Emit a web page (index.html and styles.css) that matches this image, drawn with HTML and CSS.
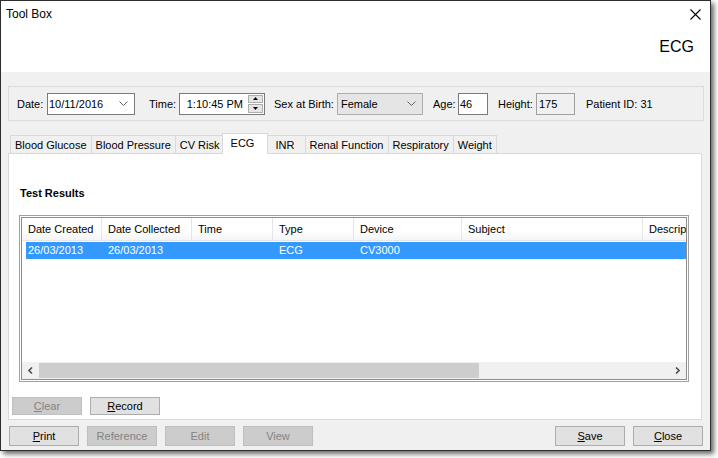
FILE: index.html
```html
<!DOCTYPE html>
<html lang="en">

<head>
    <meta charset="UTF-8">
    <title>Tool Box</title>
    <link rel="stylesheet" href="styles.css">
</head>

<body>
    <div class="window">
        <div class="header">
            <div class="titlebar">
                <span class="title">Tool Box</span>
                <svg class="close-x" width="11" height="11" viewBox="0 0 11 11">
                    <path d="M0.5 0.5 L10.5 10.5 M10.5 0.5 L0.5 10.5" stroke="#000" stroke-width="1.1" fill="none" />
                </svg>
            </div>
            <div class="heading">ECG</div>
        </div>

        <div class="content">
            <!-- patient details -->
            <div class="patient">
                <span class="lbl lbl-date">Date:</span>
                <div class="field combo date">
                    <span>10/11/2016</span>
                    <svg class="chev" width="9" height="5" viewBox="0 0 9 5"><polyline points="0.5,0.5 4.5,4.5 8.5,0.5" fill="none" stroke="#606060" /></svg>
                </div>
                <span class="lbl lbl-time">Time:</span>
                <div class="field time">
                    <span class="time-val">1:10:45 PM</span>
                    <div class="spin">
                        <div class="spin-btn"><svg width="5" height="3" viewBox="0 0 5 3"><polygon points="2.5,0 5,3 0,3" fill="#000" /></svg></div>
                        <div class="spin-btn"><svg width="5" height="3" viewBox="0 0 5 3"><polygon points="0,0 5,0 2.5,3" fill="#000" /></svg></div>
                    </div>
                </div>
                <span class="lbl lbl-sex">Sex at Birth:</span>
                <div class="field combo sex">
                    <span>Female</span>
                    <svg class="chev" width="9" height="5" viewBox="0 0 9 5"><polyline points="0.5,0.5 4.5,4.5 8.5,0.5" fill="none" stroke="#606060" /></svg>
                </div>
                <span class="lbl lbl-age">Age:</span>
                <div class="field age">46</div>
                <span class="lbl lbl-height">Height:</span>
                <div class="field height">175</div>
                <span class="lbl lbl-pid">Patient ID: 31</span>
            </div>

            <!-- tabs -->
            <div class="tabs">
                <div class="tab">Blood Glucose</div>
                <div class="tab">Blood Pressure</div>
                <div class="tab">CV Risk</div>
                <div class="tab active">ECG</div>
                <div class="tab">INR</div>
                <div class="tab">Renal Function</div>
                <div class="tab">Respiratory</div>
                <div class="tab">Weight</div>
            </div>

            <div class="panel">
                <div class="section-title">Test Results</div>
                <div class="list">
                    <div class="list-inner">
                        <div class="list-head">
                            <div class="col c1">Date Created</div>
                            <div class="col c2">Date Collected</div>
                            <div class="col c3">Time</div>
                            <div class="col c4">Type</div>
                            <div class="col c5">Device</div>
                            <div class="col c6">Subject</div>
                            <div class="col c7">Description</div>
                        </div>
                        <div class="list-row">
                            <div class="col c1">26/03/2013</div>
                            <div class="col c2">26/03/2013</div>
                            <div class="col c3"></div>
                            <div class="col c4">ECG</div>
                            <div class="col c5">CV3000</div>
                            <div class="col c6"></div>
                        </div>
                        <div class="hscroll">
                            <div class="arrow"><svg width="5" height="7" viewBox="0 0 5 7"><polyline points="4,0.5 1,3.5 4,6.5" fill="none" stroke="#505050" stroke-width="1.6" /></svg></div>
                            <div class="thumb"></div>
                            <div class="track"></div>
                            <div class="arrow"><svg width="5" height="7" viewBox="0 0 5 7"><polyline points="1,0.5 4,3.5 1,6.5" fill="none" stroke="#505050" stroke-width="1.6" /></svg></div>
                        </div>
                    </div>
                </div>
                <div class="panel-buttons">
                    <div class="btn disabled"><u>C</u>lear</div>
                    <div class="btn"><u>R</u>ecord</div>
                </div>
            </div>
        </div>

        <div class="footer">
            <div class="btn"><u>P</u>rint</div>
            <div class="btn disabled">Reference</div>
            <div class="btn disabled">Edit</div>
            <div class="btn disabled">View</div>
            <div class="spacer"></div>
            <div class="btn"><u>S</u>ave</div>
            <div class="btn"><u>C</u>lose</div>
        </div>
    </div>
</body>

</html>
```

FILE: styles.css
```css
* {
    box-sizing: border-box;
    margin: 0;
    padding: 0;
}

body {
    min-height: 458px;
    background: #fff;
    font-family: "Liberation Sans", Arial, sans-serif;
    font-size: 11px;
    color: #000;
}

.window {
    width: 711px;
    height: 451px;
    border: 1px solid #2d2d2d;
    box-shadow: 3px 3px 5px rgba(0, 0, 0, 0.6);
    background: #f0f0f0;
    display: flex;
    flex-direction: column;
}

/* white header */
.header {
    height: 71px;
    flex-shrink: 0;
    background: #fff;
}

.titlebar {
    height: 16px;
    margin-top: 5px;
    padding: 0 9px 0 5px;
    display: flex;
    justify-content: space-between;
    align-items: center;
}

.title {
    font-size: 12px;
}

.heading {
    margin-top: 16px;
    padding-right: 16px;
    text-align: right;
    font-size: 16px;
    line-height: 18px;
}

.content {
    height: 348px;
    flex-shrink: 0;
    padding: 14px 6px 0 7px;
}

/* patient row */
.patient {
    height: 35px;
    border: 1px solid #dcdcdc;
    display: flex;
    align-items: center;
    padding-left: 8px;
    white-space: nowrap;
}

.lbl-date { width: 30px; }
.lbl-time { width: 30px; margin-left: 14px; }
.lbl-sex { width: 63px; margin-left: 9px; }
.lbl-age { width: 25px; margin-left: 10px; }
.lbl-height { width: 38px; margin-left: 10px; }
.lbl-pid { margin-left: 11px; }

.field {
    height: 22px;
    border: 1px solid #7a7a7a;
    background: #fff;
    display: flex;
    align-items: center;
    padding-left: 1px;
}

.combo {
    justify-content: space-between;
    padding-right: 6px;
}

.date { width: 88px; }

.time {
    width: 86px;
    justify-content: flex-end;
    padding-right: 1px;
}

.time-val {
    margin-right: 5px;
}

.spin {
    width: 15px;
    height: 18px;
    display: flex;
    flex-direction: column;
    gap: 1px;
}

.spin-btn {
    flex: 1;
    background: #e5e5e5;
    border: 1px solid #adadad;
    display: flex;
    align-items: center;
    justify-content: center;
}

.sex {
    width: 86px;
    background: #e5e5e5;
    border-color: #adadad;
    padding-left: 3px;
}

.age { width: 30px; }

.height {
    width: 39px;
    background: #f0f0f0;
    border-color: #a0a0a0;
    padding-left: 2px;
}

/* tabs */
.tabs {
    position: relative;
    z-index: 1;
    height: 21px;
    margin-top: 12px;
    margin-bottom: -1px;
    padding-left: 3px;
    display: flex;
    align-items: flex-end;
}

.tab {
    height: 18px;
    min-width: 41px;
    margin: 0 0 1px -1px;
    padding: 0 4px;
    border: 1px solid #d9d9d9;
    border-bottom: 0;
    background: #f0f0f0;
    line-height: 18px;
    text-align: center;
    white-space: nowrap;
}

.tab.active {
    position: relative;
    height: 21px;
    min-width: 46px;
    margin: 0 -2px 0 -3px;
    background: #fff;
    line-height: 19px;
    padding-right: 8px;
}

.panel {
    width: 694px;
    height: 267px;
    background: #fff;
    border: 1px solid #d9d9d9;
    padding-left: 3px;
}

.section-title {
    margin-top: 32px;
    padding-left: 8px;
    font-weight: bold;
    line-height: 14px;
}

/* list view */
.list {
    width: 670px;
    height: 167px;
    margin: 15px 0 0 7px;
    border: 1px solid #a0a0a0;
    padding: 1px;
}

.list-inner {
    height: 100%;
    border: 1px solid #8d8d8d;
    display: flex;
    flex-direction: column;
    overflow: hidden;
}

.list-head {
    height: 23px;
    flex-shrink: 0;
    display: flex;
    border-bottom: 1px solid #e5e5e5;
    background: linear-gradient(#fff, #fff 55%, #f4f5f7);
    line-height: 22px;
}

.col {
    flex-shrink: 0;
    padding-left: 6px;
    white-space: nowrap;
    overflow: hidden;
}

.list-head .col {
    border-right: 1px solid #e5e5e5;
}

.c1 { width: 80px; }
.c2 { width: 90px; }
.c3 { width: 81px; }
.c4 { width: 81px; }
.c5 { width: 108px; }
.c6 { width: 181px; }
.c7 { width: 80px; }

.list-row {
    height: 17px;
    margin: 1px 0 0 4px;
    display: flex;
    background: #3399ff;
    color: #fff;
    line-height: 17px;
}

.list-row .c1 {
    width: 76px;
    padding-left: 2px;
}

.hscroll {
    margin-top: auto;
    height: 17px;
    flex-shrink: 0;
    display: flex;
    background: #f0f0f0;
}

.arrow {
    width: 17px;
    display: flex;
    align-items: center;
    justify-content: center;
}

.thumb {
    width: 440px;
    margin: 1px 0;
    background: #cdcdcd;
}

.track {
    flex: 1;
}

/* buttons */
.panel-buttons {
    margin-top: 15px;
    display: flex;
    gap: 8px;
}

.btn {
    width: 70px;
    height: 20px;
    border: 1px solid #adadad;
    background: #e1e1e1;
    display: flex;
    align-items: center;
    justify-content: center;
}

.panel-buttons .btn {
    height: 18px;
}

.btn.disabled {
    background: #cccccc;
    border-color: #bfbfbf;
    color: #838383;
}

.footer {
    height: 30px;
    padding: 6px 7px 0 8px;
    display: flex;
    gap: 8px;
}

.spacer {
    flex: 1;
}
```
